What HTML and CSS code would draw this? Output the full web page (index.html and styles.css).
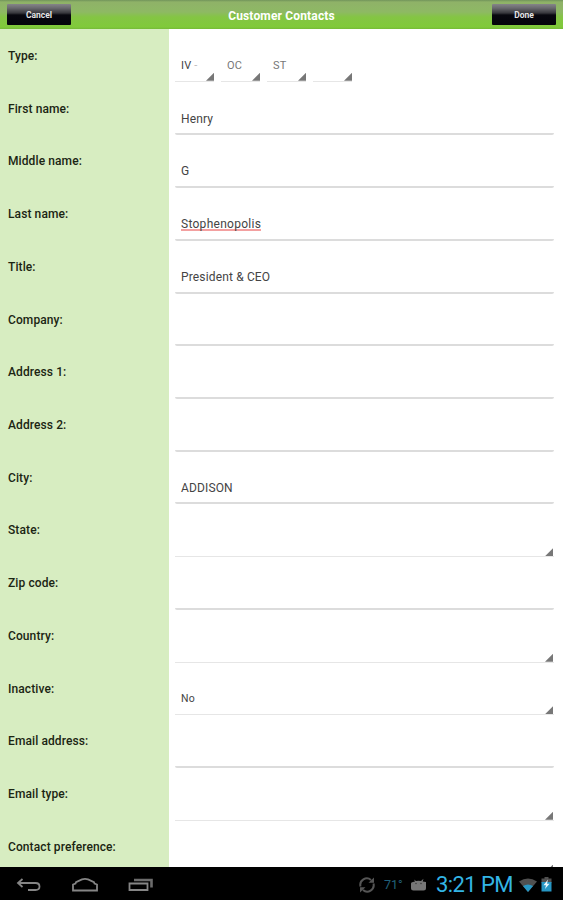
FILE: index.html
```html
<!DOCTYPE html>
<html lang="en">
<head>
    <meta charset="UTF-8">
    <meta name="viewport" content="width=device-width, initial-scale=1.0">
    <title>Customer Contacts</title>
    <link rel="stylesheet" href="styles.css">
</head>
<body>
    <header class="title-bar">
        <button class="bar-btn" type="button">Cancel</button>
        <h1>Customer Contacts</h1>
        <button class="bar-btn" type="button">Done</button>
    </header>

    <main class="form">
        <div class="row">
            <div class="label">Type:</div>
            <div class="types">
                <div class="field select">IV<span class="faded">&nbsp;-</span></div>
                <div class="field select soft">OC</div>
                <div class="field select soft">ST</div>
                <div class="field select"></div>
            </div>
        </div>
        <div class="row"><div class="label">First name:</div><div class="field text">Henry</div></div>
        <div class="row"><div class="label">Middle name:</div><div class="field text">G</div></div>
        <div class="row"><div class="label">Last name:</div><div class="field text"><span class="misspelled">Stophenopolis</span></div></div>
        <div class="row"><div class="label">Title:</div><div class="field text">President &amp; CEO</div></div>
        <div class="row"><div class="label">Company:</div><div class="field text"></div></div>
        <div class="row"><div class="label">Address 1:</div><div class="field text"></div></div>
        <div class="row"><div class="label">Address 2:</div><div class="field text"></div></div>
        <div class="row"><div class="label">City:</div><div class="field text">ADDISON</div></div>
        <div class="row"><div class="label">State:</div><div class="field select"></div></div>
        <div class="row"><div class="label">Zip code:</div><div class="field text"></div></div>
        <div class="row"><div class="label">Country:</div><div class="field select"></div></div>
        <div class="row"><div class="label">Inactive:</div><div class="field select">No</div></div>
        <div class="row"><div class="label">Email address:</div><div class="field text"></div></div>
        <div class="row"><div class="label">Email type:</div><div class="field select"></div></div>
        <div class="row"><div class="label">Contact preference:</div><div class="field select"></div></div>
    </main>

    <footer class="system-bar">
        <div class="nav-keys">
            <svg width="28" height="18" viewBox="0 0 28 18"><path d="M7.500 3 3 7l4.500 4M3.500 7H20.500q4 0 4 3.500t-4 3.500H13"/></svg>
            <svg width="28" height="18" viewBox="0 0 28 18"><path d="M2 14.500V8.500L4.500 7.500 5 6.200 11 3.400Q14 2.200 17 3.400L23 6.200l.5 1.300 2.500 1V14.500Z"/></svg>
            <svg width="28" height="18" viewBox="0 0 28 18"><path d="M2.500 7.500H20.500v6.500H2.500Z"/><path class="thick" d="M7 4H24.500V11.500"/></svg>
        </div>
        <div class="status">
            <svg class="sync" width="18" height="18" viewBox="0 0 18 18"><path d="M2.500 10.500A6.500 6.500 0 0 1 13 4M15.500 7.500A6.500 6.500 0 0 1 5 14"/><path class="solid" d="M10.500 6.800H16V1.500ZM7.500 11.200H2V16.500Z"/></svg>
            <span class="temp">71°</span>
            <svg class="droid" width="17" height="14" viewBox="0 0 17 14"><path d="M1 5.500Q1 4 3 4L5 3.500 4 1.500 6 3Q8.500 2.300 11 3L13.500 .8 12.700 3.500 16 4V10Q16 12.500 13.500 12.500H3.500Q1 12.500 1 10Z"/><circle cx="6" cy="5.500" r=".7"/><circle cx="11" cy="5.500" r=".7"/></svg>
            <span class="clock">3:21 PM</span>
            <svg class="wifi" width="18" height="16" viewBox="0 0 18 16"><path class="off" d="M0 4.500Q9-1.500 18 4.500L9 15Z"/><path class="on" d="M4 9Q9 6 14 9L9 15Z"/></svg>
            <svg class="battery" width="11" height="17" viewBox="0 0 11 17"><path class="off" d="M.5 2.500H3.500V1H7.500V2.500H10.500V7H.5Z"/><path class="on" d="M.5 6H10.500V15.500H.5Z"/><path class="bolt" d="M7 3.500 2.500 9.300H5L4 13 8.500 7.700H6Z"/></svg>
        </div>
    </footer>
</body>
</html>
```
FILE: styles.css
```css
* { box-sizing: border-box; }
body { margin: 0; height: 900px; display: flex; flex-direction: column; overflow: hidden; background: #fff; font-family: Roboto, sans-serif; }

.title-bar { height: 29px; flex: none; display: flex; justify-content: space-between; align-items: flex-start; padding: 4px 7px 0; background: linear-gradient(#71945a 0, #8fb268 2px, #8eb964 12px, #84c544 17px, #80ca3a 27px, #75b938 29px); }
.title-bar h1 { margin: 0; padding-top: 1px; font-size: 12px; line-height: 22px; letter-spacing: 0.16px; color: #fff; }
.bar-btn { width: 64px; height: 21px; padding: 0; border: none; border-radius: 1px; background: linear-gradient(#858588 0, #6a6a6f 4px, #38383d 9px, #08080f 11px, #04040a 100%); color: #e6e6e6; font: bold 8.5px Roboto, sans-serif; }

.form { flex: 1; min-height: 0; overflow: hidden; background: linear-gradient(to right, #d7edc1 169px, #fff 169px); }
.row { height: 52.73px; display: flex; }
.label { width: 169px; flex: none; padding: 19px 0 0 8px; font-size: 12px; font-weight: 500; line-height: 16px; letter-spacing: 0.1px; color: #1b2513; }

.field { position: relative; flex: 1; margin: 0 9px -1px 6px; padding: 29px 0 0 6px; font-size: 12px; line-height: 16px; letter-spacing: 0.15px; color: #444; white-space: nowrap; }
.text { border-bottom: 2px solid #dcdcdc; border-radius: 0 0 2px 2px; }
.select { border-bottom: 1px solid #e6e6e6; font-size: 10.5px; }
.select::after { content: ""; position: absolute; right: 1px; bottom: 0; width: 8px; height: 8px; background: #777; clip-path: polygon(100% 0, 100% 100%, 0 100%); }

.types { display: flex; gap: 7px; margin-left: 6px; }
.types .field { flex: none; width: 39px; margin: 0; font-size: 11px; }
.types .select::after { right: 0; }
.soft { color: #777; }
.faded { color: #bbb; }
.misspelled { display: inline-block; height: 15px; border-bottom: 2px solid #f3a0a0; letter-spacing: 0.28px; }

.system-bar { height: 33px; flex: none; display: flex; justify-content: space-between; align-items: center; background: #000; }
.nav-keys { display: flex; gap: 28px; padding: 2px 0 0 15px; }
.nav-keys path { fill: none; stroke: #858585; stroke-width: 1.8; }
.nav-keys .thick { stroke-width: 2.6; stroke: #6c6c6c; }
.status { display: flex; align-items: center; padding: 2px 11px 0 0; }
.sync path { fill: none; stroke: #555; stroke-width: 2; }
.sync .solid { fill: #555; stroke: none; }
.temp { margin-left: 8px; width: 26px; font-size: 12.5px; color: #20617b; }
.droid path { fill: #777; }
.droid circle { fill: #333; }
.clock { margin-left: 9px; width: 83px; font-size: 22px; line-height: 30px; letter-spacing: -0.6px; color: #33b5e5; white-space: nowrap; }
.battery { margin-left: 4px; }
.off { fill: #505050; }
.on { fill: #2797c4; }
.bolt { fill: #e8f6fc; }
```
